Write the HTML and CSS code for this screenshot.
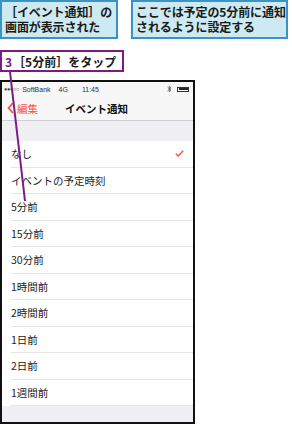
FILE: index.html
```html
<!DOCTYPE html>
<html lang="ja">
<head>
<meta charset="utf-8">
<link rel="stylesheet" href="styles.css">
</head>
<body>
<div class="page">
  <div class="callouts">
    <div class="callout blue c1"><span class="ln">［イベント通知］の</span><span class="ln">画面が表示された</span></div>
    <div class="callout blue c2"><span class="ln">ここでは予定の5分前に通知</span><span class="ln">されるように設定する</span></div>
  </div>
  <div class="step"><span class="num">3</span>［5分前］をタップ</div>
  <div class="phone">
    <div class="status">
      <span class="dots">●●●○○</span>
      <span class="carrier">SoftBank</span>
      <span class="net">4G</span>
      <span class="time">11:45</span>
      <span class="spacer"></span>
      <svg class="bt" width="5" height="8" viewBox="0 0 5 8"><path d="M0.5 2 L4 5.2 L2.3 6.8 V1.2 L4 2.8 L0.5 6" fill="none" stroke="#555" stroke-width="0.8"/></svg>
      <span class="battery"><span class="fill"></span></span>
    </div>
    <div class="nav">
      <div class="back">
        <svg width="7" height="12" viewBox="0 0 7 12"><path d="M6 1 L1.5 6 L6 11" fill="none" stroke="#f2553f" stroke-width="1.8"/></svg>
        <span>編集</span>
      </div>
      <div class="title">イベント通知</div>
    </div>
    <div class="gap"></div>
    <ul class="list">
      <li><span>なし</span><svg class="check" width="9" height="7" viewBox="0 0 9 7"><path d="M0.8 3.8 L3.2 6 L8.2 0.8" fill="none" stroke="#f2553f" stroke-width="1.4"/></svg></li>
      <li><span>イベントの予定時刻</span></li>
      <li><span>5分前</span></li>
      <li><span>15分前</span></li>
      <li><span>30分前</span></li>
      <li><span>1時間前</span></li>
      <li><span>2時間前</span></li>
      <li><span>1日前</span></li>
      <li><span>2日前</span></li>
      <li><span>1週間前</span></li>
    </ul>
    <div class="foot"></div>
  </div>
  <svg class="leader" width="292" height="425" viewBox="0 0 292 425"><line x1="10" y1="72" x2="25" y2="201" stroke="#7d1a84" stroke-width="2"/></svg>
</div>
</body>
</html>
```

FILE: styles.css
```css
html, body {
  margin: 0;
  padding: 0;
  background: #fff;
}
.page {
  position: relative;
  width: 292px;
  height: 425px;
  overflow: hidden;
  font-family: "Noto Sans CJK JP", "Noto Sans", sans-serif;
}
.callouts {
  display: flex;
  gap: 13px;
  height: 39px;
}
.callout {
  box-sizing: border-box;
  height: 39px;
  padding: 2px 0 0 3px;
  display: flex;
  flex-direction: column;
  font-size: 12px;
  font-weight: 700;
  color: #1a1a1a;
  letter-spacing: -0.1px;
}
.ln {
  display: block;
  height: 15px;
  line-height: 15px;
  overflow: visible;
  white-space: nowrap;
}
.blue {
  background: #cdeaf3;
  border: 2px solid #3b93c3;
}
.c1 { width: 118px; }
.c2 { width: 157px; }
.step {
  box-sizing: border-box;
  margin-top: 11px;
  width: 124px;
  height: 22px;
  border: 2px solid #7d1a84;
  padding: 1px 0 0 3px;
  font-size: 12px;
  line-height: 17px;
  font-weight: 700;
  color: #1a1a1a;
  white-space: nowrap;
}
.num {
  color: #7d1a84;
  margin-right: 1px;
}
.phone {
  box-sizing: border-box;
  margin-top: 8px;
  width: 195px;
  height: 344px;
  border: 2px solid #111;
  background: #efeff4;
  display: flex;
  flex-direction: column;
}
.status {
  height: 14px;
  background: #f7f7f7;
  display: flex;
  align-items: center;
  font-family: "Liberation Sans", sans-serif;
  font-size: 7px;
  color: #333;
  padding: 0 4px 0 2px;
}
.dots { font-size: 5.5px; letter-spacing: -0.3px; color: #444; }
.carrier { margin-left: 3px; }
.net { margin-left: 8px; }
.time { margin-left: 14px; }
.spacer { flex: 1; }
.bt { margin-right: 5px; }
.battery {
  width: 12px;
  height: 5px;
  border: 0.8px solid #333;
  box-sizing: border-box;
  display: flex;
  padding: 0.5px;
}
.battery .fill { flex: 1; background: #222; }
.nav {
  height: 24px;
  background: #f7f7f7;
  border-bottom: 1px solid #cfcfd3;
  position: relative;
  display: flex;
  align-items: center;
}
.back {
  display: flex;
  align-items: center;
  gap: 3px;
  padding-left: 5px;
  color: #f2553f;
  font-size: 10.5px;
}
.title {
  position: absolute;
  left: 0;
  right: 0;
  text-align: center;
  font-size: 10.5px;
  font-weight: 700;
  color: #111;
  padding-right: 2px;
}
.gap { height: 20px; }
.list {
  list-style: none;
  margin: 0;
  padding: 0;
  background: #fff;
}
.list li {
  box-sizing: border-box;
  height: 26.5px;
  margin-left: 9px;
  border-bottom: 1px solid #e4e4e6;
  display: flex;
  align-items: center;
  justify-content: space-between;
  padding-right: 9px;
  font-size: 10.5px;
  color: #222;
}
.foot { flex: 1; }
.leader {
  position: absolute;
  left: 0;
  top: 0;
  pointer-events: none;
}
```
